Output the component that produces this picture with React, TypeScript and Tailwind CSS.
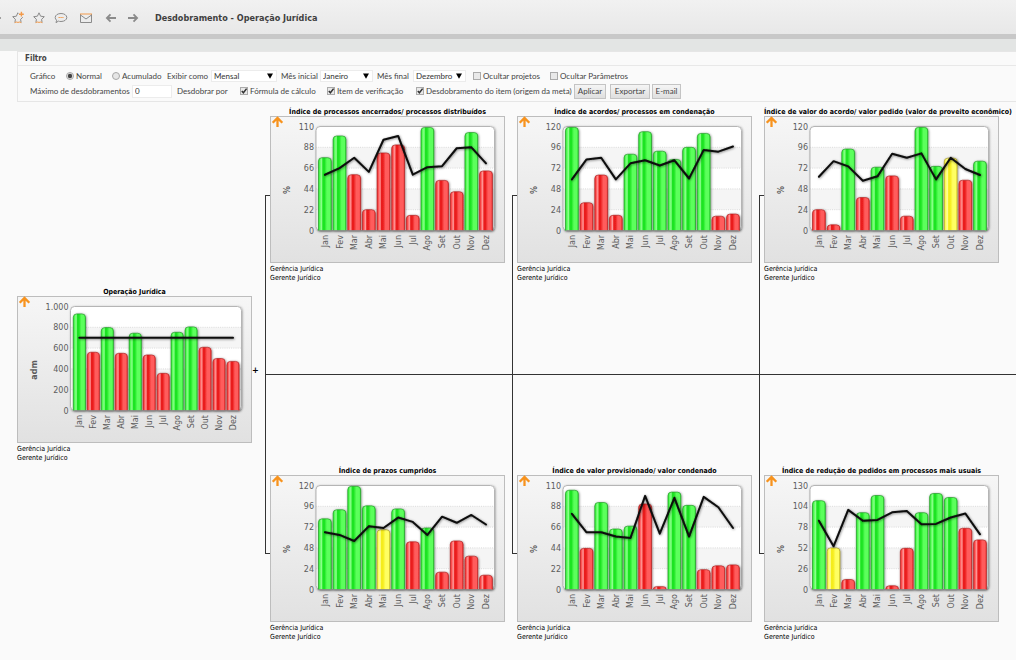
import type { ReactNode } from "react";

type Tone = "g" | "r" | "y";

interface Indicator {
  id: string;
  title: string;
  unit: string;
  max: number;
  tones: string;
  bars: number[];
  line: number[];
}

const MONTHS = ["Jan", "Fev", "Mar", "Abr", "Mai", "Jun", "Jul", "Ago", "Set", "Out", "Nov", "Dez"];

const ROOT: Indicator = {
  id: "root",
  title: "Operação Jurídica",
  unit: "adm",
  max: 1000,
  tones: "grgrgrrggrrr",
  bars: [929, 560, 797, 550, 743, 534, 357, 752, 804, 608, 500, 472],
  line: [700, 700, 700, 700, 700, 700, 700, 700, 700, 700, 700, 700],
};

const COLUMNS: Indicator[][] = [
  [
    {
      id: "encerrados",
      title: "Índice de processos encerrados/ processos distribuídos",
      unit: "%",
      max: 110,
      tones: "ggrrrrrgrrgr",
      bars: [77, 100, 59, 22, 82, 90.5, 16, 109, 53, 41, 103.6, 63],
      line: [59, 66, 77, 62, 96, 100, 59, 67, 68, 87, 88, 71],
    },
    {
      id: "prazos",
      title: "Índice de prazos cumpridos",
      unit: "%",
      max: 120,
      tones: "ggggygrgrrrr",
      bars: [81.5, 92, 119, 96.5, 69, 93, 55, 71, 20, 56, 38.5, 16.5],
      line: [66, 63, 56, 73, 71, 83, 78, 63, 84, 77, 86, 75],
    },
  ],
  [
    {
      id: "acordos",
      title: "Índice de acordos/ processos em condenação",
      unit: "%",
      max: 120,
      tones: "grrrggggggrr",
      bars: [119, 32, 64, 17.5, 88, 114, 91.5, 82, 96, 112, 16.5, 19],
      line: [59, 82, 84, 59, 77.5, 81, 75, 81, 60, 93, 91, 97],
    },
    {
      id: "provisionado",
      title: "Índice de valor provisionado/ valor condenado",
      unit: "%",
      max: 110,
      tones: "grgggrrggrrr",
      bars: [105, 43.5, 92, 64, 67, 90.5, 3, 103, 89, 21, 25, 26],
      line: [80, 60.5, 60.5, 56, 54.5, 99, 59, 97, 56, 98, 87, 65],
    },
  ],
  [
    {
      id: "proveito",
      title: "Índice de valor do acordo/ valor pedido (valor de proveito econômico)",
      unit: "%",
      max: 120,
      tones: "rrgrgrrggyrg",
      bars: [24, 6.5, 94, 38, 73, 63, 16.5, 119, 74, 83.5, 58, 80],
      line: [62, 80, 74, 57.5, 62.5, 88.5, 84, 89, 59, 84, 71, 64],
    },
    {
      id: "reducao",
      title: "Índice de redução de pedidos em processos mais usuais",
      unit: "%",
      max: 130,
      tones: "gyrggrrgggrr",
      bars: [111, 52, 12.5, 96, 117.5, 4.6, 51.5, 96, 120, 115, 76.5, 62],
      line: [86, 54, 99.5, 86, 87, 96.5, 98, 81.5, 82, 90, 95, 69],
    },
  ],
];

const PALETTE: Record<Tone, { edge: string; light: string; deep: string; soft: string }> = {
  g: { edge: "#2a9a2e", light: "#8dff8d", deep: "#1ce421", soft: "#5cff5c" },
  r: { edge: "#b02a2a", light: "#ff9a9a", deep: "#ea1b1b", soft: "#ff5c5c" },
  y: { edge: "#a89a30", light: "#ffff9e", deep: "#f5ec1c", soft: "#ffff62" },
};

function Chart({ data }: { data: Indicator }) {
  const left = data.max === 1000 ? 53.5 : 46;
  const right = 224.5;
  const top = 10.5;
  const bottom = 114.5;
  const first = left + 8.9;
  const step = (216 - first) / 11;
  const barWidth = step - 1.8;
  const y = (v: number) => bottom - (v / data.max) * (bottom - top);
  const x = (i: number) => first + i * step;
  const ticks = [0, 1, 2, 3, 4, 5];
  const points = data.line.map((v, i) => `${x(i)},${y(v)}`).join(" ");
  const font = "'DejaVu Sans', Verdana, sans-serif";

  return (
    <svg viewBox="0 0 235 147" className="block h-full w-full" role="img" aria-label={data.title}>
      <defs>
        <linearGradient id={`${data.id}-bg`} x1="0" y1="0" x2="0" y2="1">
          <stop offset="0" stopColor="#f6f6f6" />
          <stop offset="1" stopColor="#e1e1e1" />
        </linearGradient>
        {(["g", "r", "y"] as Tone[]).map((t) => (
          <linearGradient key={t} id={`${data.id}-${t}`} x1="0" y1="0" x2="1" y2="0">
            <stop offset="0" stopColor={PALETTE[t].deep} />
            <stop offset="0.12" stopColor={PALETTE[t].soft} />
            <stop offset="0.24" stopColor={PALETTE[t].light} />
            <stop offset="0.34" stopColor={PALETTE[t].deep} />
            <stop offset="0.46" stopColor={PALETTE[t].deep} />
            <stop offset="0.66" stopColor={PALETTE[t].soft} />
            <stop offset="0.9" stopColor={PALETTE[t].soft} />
            <stop offset="1" stopColor={PALETTE[t].deep} />
          </linearGradient>
        ))}
        <filter id={`${data.id}-shadow`} x="0" y="0" width="235" height="147" filterUnits="userSpaceOnUse">
          <feDropShadow dx="0.6" dy="0.6" stdDeviation="1.2" floodColor="#000" floodOpacity="0.5" />
        </filter>
        <clipPath id={`${data.id}-plot`}>
          <rect x={left} y={top} width={right - left} height={bottom - top} rx="4" />
        </clipPath>
      </defs>
      <rect x="0.5" y="0.5" width="234" height="146" fill={`url(#${data.id}-bg)`} stroke="#bdbdbd" />
      <rect x={left} y={top} width={right - left} height={bottom - top} rx="4" fill="#fff" filter={`url(#${data.id}-shadow)`} />
      <g clipPath={`url(#${data.id}-plot)`}>
        <rect x={left} y={y(data.max * 0.8)} width={right - left} height={(bottom - top) / 5} fill="#f5f5f5" />
        <rect x={left} y={y(data.max * 0.4)} width={right - left} height={(bottom - top) / 5} fill="#f5f5f5" />
      </g>
      {ticks.slice(1, 5).map((t) => (
        <line key={t} x1={left} x2={right} y1={y((data.max * t) / 5)} y2={y((data.max * t) / 5)} stroke="#cfcfcf" strokeWidth="0.7" strokeDasharray="1 1.2" />
      ))}
      <rect x={left} y={top} width={right - left} height={bottom - top} rx="4" fill="none" stroke="#b5b5b5" />
      <g filter={`url(#${data.id}-shadow)`}>
        {data.bars.map((v, i) => {
          const h = bottom - y(v);
          const r = Math.min(3.5, h);
          const x0 = x(i) - barWidth / 2;
          const tone = data.tones[i] as Tone;
          return (
            <path
              key={i}
              d={`M${x0} ${bottom}V${y(v) + r}q0 ${-r} ${r} ${-r}h${barWidth - 2 * r}q${r} 0 ${r} ${r}V${bottom}`}
              fill={`url(#${data.id}-${tone})`}
              stroke={PALETTE[tone].edge}
              strokeWidth="0.7"
            />
          );
        })}
      </g>
      <line x1={left + 3} x2={right - 3} y1={bottom} y2={bottom} stroke="#888" strokeWidth="0.8" />
      <polyline points={points} fill="none" stroke="#0a0a0a" strokeWidth="2" strokeLinejoin="round" strokeLinecap="round" filter={`url(#${data.id}-shadow)`} />
      {ticks.map((t) => {
        const value = (data.max * t) / 5;
        return (
          <text key={t} x={left - 2} y={y(value) + 3} textAnchor="end" fontSize="8" fill="#5c5c5c" fontFamily={font}>
            {value === 1000 ? "1.000" : value}
          </text>
        );
      })}
      {MONTHS.map((m, i) => (
        <text key={m} transform={`translate(${x(i) + 3} 119) rotate(-90)`} textAnchor="end" fontSize="8" fill="#5c5c5c" fontFamily={font}>
          {m}
        </text>
      ))}
      <text transform="translate(20 74) rotate(-90)" textAnchor="middle" fontSize="8" fontWeight="700" fill="#5c5c5c" fontFamily={font}>
        {data.unit}
      </text>
      <path d="M7.5 11V2.5M2.7 6.8L7.5 2L12.3 6.8" fill="none" stroke="#f7931e" strokeWidth="2.3" />
    </svg>
  );
}

function Node({ data }: { data: Indicator }) {
  return (
    <article className="w-[235px] shrink-0 text-[7px] text-black">
      <h2 className="h-[9px] text-center leading-[11px] font-bold whitespace-nowrap">{data.title}</h2>
      <div className="h-[147px]">
        <Chart data={data} />
      </div>
      <div className="pt-[2px] leading-[9px]">
        <p>Gerência Jurídica</p>
        <p>Gerente Jurídico</p>
      </div>
    </article>
  );
}

function Tick({ type, name, label, checked, className }: { type: "radio" | "checkbox"; name: string; label: string; checked?: boolean; className: string }) {
  return (
    <label className={`flex shrink-0 items-center gap-[2px] whitespace-nowrap ${className}`}>
      <span className="relative flex">
        <input
          type={type}
          name={name}
          defaultChecked={checked}
          className={
            type === "radio"
              ? "peer size-2 appearance-none rounded-full border border-[#a8a8a8] bg-[#e6e6e6]"
              : "peer size-2 appearance-none border border-[#ababab] bg-[#e9e9e9]"
          }
        />
        <svg viewBox="0 0 8 8" className="pointer-events-none absolute inset-0 hidden size-2 peer-checked:block">
          {type === "radio" ? <circle cx="4" cy="4" r="2.2" fill="#444" /> : <path d="M1.8 4L3.4 5.8L6.6 1.6" fill="none" stroke="#333" strokeWidth="1.5" />}
        </svg>
      </span>
      {label}
    </label>
  );
}

function Select({ id, label, options, value, className }: { id: string; label: string; options: string[]; value: string; className: string }) {
  return (
    <div className={`flex shrink-0 items-center justify-between ${className}`}>
      <label htmlFor={id} className="whitespace-nowrap">{label}</label>
      <span className={id === "exibir" ? "relative flex w-[66px]" : "relative flex w-[53px]"}>
        <select id={id} defaultValue={value} className="h-3 w-full appearance-none border border-[#ececec] bg-white pl-[2px] leading-[10px] text-[#333]">
          {options.map((o) => (
            <option key={o}>{o}</option>
          ))}
        </select>
        <svg viewBox="0 0 6 6" className="pointer-events-none absolute top-[3px] right-1 size-[6px]">
          <path d="M0 0.5H6L3 5.8z" fill="#000" />
        </svg>
      </span>
    </div>
  );
}

function Filter() {
  const button = "h-[15px] shrink-0 border border-[#c4c4c4] bg-linear-to-b from-[#f5f5f5] to-[#dfdfdf] text-center leading-[13px]";
  return (
    <form className="ml-[17px] border-y border-l border-[#e6e6e6] text-[8px] text-[#444] [font-family:Lato,'Liberation_Sans',sans-serif]">
      <h2 className="h-[14px] border-b border-[#e8e8e8] pl-[7px] leading-[13px] font-bold text-[#444] [font-family:'DejaVu_Sans_Condensed',sans-serif]">Filtro</h2>
      <div className="flex h-[35px] flex-col justify-center pl-3">
        <div className="flex h-[15px] items-center">
          <span className="w-9 shrink-0">Gráfico</span>
          <Tick type="radio" name="tipo" label="Normal" checked className="w-[46px]" />
          <Tick type="radio" name="tipo" label="Acumulado" className="w-[55px]" />
          <Select id="exibir" label="Exibir como" value="Mensal" options={["Mensal", "Trimestral", "Anual"]} className="w-[110px]" />
          <Select id="inicial" label="Mês inicial" value="Janeiro" options={["Janeiro", "Fevereiro", "Março"]} className="ml-1 w-[92px]" />
          <Select id="final" label="Mês final" value="Dezembro" options={["Outubro", "Novembro", "Dezembro"]} className="ml-1 w-[89px]" />
          <Tick type="checkbox" name="projetos" label="Ocultar projetos" className="ml-[7px] w-[77px]" />
          <Tick type="checkbox" name="parametros" label="Ocultar Parâmetros" className="" />
        </div>
        <div className="flex h-[15px] items-center">
          <label htmlFor="maximo" className="w-[102px] shrink-0 whitespace-nowrap">Máximo de desdobramentos</label>
          <input id="maximo" type="text" defaultValue="0" className="h-[13px] w-10 shrink-0 border border-[#ececec] bg-white px-[2px] text-[#333]" />
          <span className="ml-[5px] w-[63px] shrink-0 whitespace-nowrap">Desdobrar por</span>
          <Tick type="checkbox" name="formula" label="Fórmula de cálculo" checked className="w-[87px]" />
          <Tick type="checkbox" name="item" label="Item de verificação" checked className="w-[89px]" />
          <Tick type="checkbox" name="desdobramento" label="Desdobramento do item (origem da meta)" checked className="w-[158px]" />
          <button type="button" className={`${button} w-8`}>Aplicar</button>
          <button type="button" className={`${button} ml-[4px] w-10`}>Exportar</button>
          <button type="button" className={`${button} ml-[2px] w-[29px]`}>E-mail</button>
        </div>
      </div>
    </form>
  );
}

function IconButton({ label, className, children }: { label: string; className: string; children: ReactNode }) {
  return (
    <button type="button" aria-label={label} className={className}>
      <svg viewBox="0 0 14 14" className="size-[14px]" fill="none" stroke="#8b8b8b" strokeWidth="1">
        {children}
      </svg>
    </button>
  );
}

function Header() {
  return (
    <header>
      <div className="flex h-[34px] items-center bg-linear-to-b from-[#f1f1f1] to-[#e8e8e8] pt-[2px]">
        <span className="h-[2px] w-[1px] bg-[#a0a0a0]" />
        <IconButton label="Adicionar favorito" className="ml-[10px]">
          <path d="M7.3 2.6L6.8 1.8L5.4 5.2L1.7 5.7L4.4 8.3L3.9 11.6M10.1 11.6L9.6 8.3L11.8 6.2" />
          <path d="M3.7 11.7L5.2 11L7 11.4L8.8 11L10.3 11.7" stroke="#f39a4a" />
          <path d="M10.4 0.8V5.6M8 3.2H12.8" stroke="#f39a4a" strokeWidth="1.4" />
        </IconButton>
        <IconButton label="Favoritos" className="ml-[7px]">
          <path d="M3.9 11.6L4.4 8.3L1.7 5.7L5.4 5.2L7 1.8L8.6 5.2L12.3 5.7L9.6 8.3L10.1 11.6" />
          <path d="M3.7 11.7L5.2 11L7 11.4L8.8 11L10.3 11.7" stroke="#f39a4a" />
        </IconButton>
        <IconButton label="Comentários" className="ml-2">
          <path d="M7 2.5C10.3 2.5 12.8 4.2 12.8 6.5S10.3 10.5 7 10.5C6 10.5 5.1 10.4 4.4 10.1L2 11.7L2.6 9.2C1.7 8.5 1.2 7.5 1.2 6.5C1.2 4.2 3.7 2.5 7 2.5z" />
          <path d="M4.5 6.5H9.5" stroke="#f39a4a" strokeDasharray="1.4 0.5" />
        </IconButton>
        <IconButton label="E-mail" className="ml-[11px]">
          <path d="M1.5 3V11.5H12.5V3M1.5 4L7 8L12.5 4" />
          <path d="M1 3H13" stroke="#f39a4a" />
        </IconButton>
        <IconButton label="Voltar" className="ml-[11px]">
          <path d="M12 7H3M6.5 3.4L2.9 7L6.5 10.6" strokeWidth="1.8" />
        </IconButton>
        <IconButton label="Avançar" className="ml-2">
          <path d="M2 7H11M7.5 3.4L11.1 7L7.5 10.6" strokeWidth="1.8" />
        </IconButton>
        <h1 className="ml-[15px] pt-px text-[9px] font-bold whitespace-nowrap text-[#3f3f3f]">Desdobramento - Operação Jurídica</h1>
      </div>
      <div className="h-[5px] bg-[#c8c8c8]" />
      <div className="h-[12px] bg-[#e3e5e4]" />
    </header>
  );
}

export default function App() {
  return (
    <div className="min-h-screen overflow-hidden bg-[#fafafa] [font-family:'DejaVu_Sans_Condensed','DejaVu_Sans',Tahoma,sans-serif]">
      <Header />
      <Filter />
      <main className="relative mt-[5px] flex items-center pb-[18px] pl-[17px]">
        <Node data={ROOT} />
        <button type="button" aria-label="Recolher" className="relative -top-1 w-[13px] shrink-0 pr-[6px] text-center text-[9px] leading-[9px] font-bold">
          +
        </button>
        <div className="relative flex grow items-center before:absolute before:top-1/2 before:left-0 before:h-px before:w-[800px] before:-translate-y-px before:bg-[#333] before:content-['']">
          {COLUMNS.map((column) => (
            <section key={column[0].id} className="mr-[7px] flex shrink-0 items-center">
              <div className="h-[359px] w-[5px] shrink-0 border-y border-l border-[#333]" />
              <div className="flex flex-col gap-[183px]">
                {column.map((item) => (
                  <Node key={item.id} data={item} />
                ))}
              </div>
            </section>
          ))}
        </div>
      </main>
    </div>
  );
}
